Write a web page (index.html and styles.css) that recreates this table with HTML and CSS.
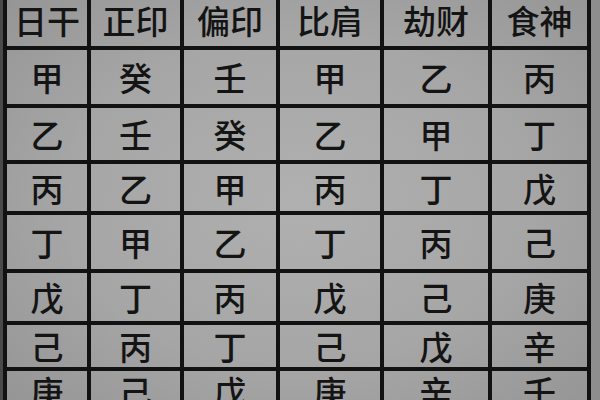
FILE: index.html
```html
<!DOCTYPE html>
<html lang="zh">
<head>
<meta charset="utf-8">
<link rel="stylesheet" href="styles.css">
</head>
<body>
<div class="table">
  <div class="cell head">日干</div><div class="cell head">正印</div><div class="cell head">偏印</div><div class="cell head">比肩</div><div class="cell head">劫财</div><div class="cell head">食神</div>
  <div class="cell">甲</div><div class="cell">癸</div><div class="cell">壬</div><div class="cell">甲</div><div class="cell">乙</div><div class="cell">丙</div>
  <div class="cell">乙</div><div class="cell">壬</div><div class="cell">癸</div><div class="cell">乙</div><div class="cell">甲</div><div class="cell">丁</div>
  <div class="cell">丙</div><div class="cell">乙</div><div class="cell">甲</div><div class="cell">丙</div><div class="cell">丁</div><div class="cell">戊</div>
  <div class="cell">丁</div><div class="cell">甲</div><div class="cell">乙</div><div class="cell">丁</div><div class="cell">丙</div><div class="cell">己</div>
  <div class="cell">戊</div><div class="cell">丁</div><div class="cell">丙</div><div class="cell">戊</div><div class="cell">己</div><div class="cell">庚</div>
  <div class="cell">己</div><div class="cell">丙</div><div class="cell">丁</div><div class="cell">己</div><div class="cell">戊</div><div class="cell">辛</div>
  <div class="cell">庚</div><div class="cell">己</div><div class="cell">戊</div><div class="cell">庚</div><div class="cell">辛</div><div class="cell">壬</div>
</div>
</body>
</html>
```
FILE: styles.css
```css
html {
  background: linear-gradient(to right, #4a4a4a 0 3px, #8e8e8e 3px);
  height: 100%;
}
body {
  margin: 0;
  height: 400px;
  overflow: hidden;
  font-family: "Noto Sans CJK SC", "Noto Sans CJK JP", sans-serif;
  font-weight: 500;
  color: #141414;
}
.table {
  display: grid;
  grid-template-columns: 80px 89px 92px 100px 104px 95px;
  grid-template-rows: 46px 54px 52px 47px 54px 48px 42px 40px;
  gap: 4px;
  padding: 0 4px;
  margin-left: 3px;
  width: max-content;
  background: #121212;
}
.cell {
  display: flex;
  align-items: center;
  justify-content: center;
  font-size: 33px;
  line-height: 36px;
  background: radial-gradient(ellipse 70% 75% at 50% 50%, #b0b0b0 0%, #a6a6a6 55%, #949494 100%) fixed;
}
.head {
  padding-bottom: 6px;
}
```
